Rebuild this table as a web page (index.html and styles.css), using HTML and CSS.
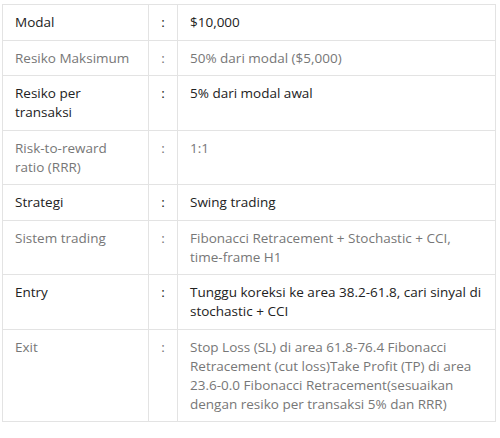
FILE: index.html
```html
<!DOCTYPE html>
<html>
<head>
<meta charset="utf-8">
<link rel="stylesheet" href="styles.css">
</head>
<body>
<div class="wrap">
<table class="info">
  <colgroup><col class="c-label"><col class="c-sep"><col class="c-val"></colgroup>
  <tr class="dark"><td>Modal</td><td class="sep">:</td><td>$10,000</td></tr>
  <tr class="light"><td>Resiko Maksimum</td><td class="sep">:</td><td>50% dari modal ($5,000)</td></tr>
  <tr class="dark"><td>Resiko per transaksi</td><td class="sep">:</td><td>5% dari modal awal</td></tr>
  <tr class="light"><td>Risk-to-reward ratio (RRR)</td><td class="sep">:</td><td>1:1</td></tr>
  <tr class="dark"><td>Strategi</td><td class="sep">:</td><td>Swing trading</td></tr>
  <tr class="light"><td>Sistem trading</td><td class="sep">:</td><td>Fibonacci Retracement + Stochastic + CCI, time-frame H1</td></tr>
  <tr class="dark"><td>Entry</td><td class="sep">:</td><td>Tunggu koreksi ke area 38.2-61.8, cari sinyal di stochastic + CCI</td></tr>
  <tr class="light"><td>Exit</td><td class="sep">:</td><td>Stop Loss (SL) di area 61.8-76.4 Fibonacci Retracement (cut loss)Take Profit (TP) di area 23.6-0.0 Fibonacci Retracement(sesuaikan dengan resiko per transaksi 5% dan RRR)</td></tr>
</table>
</div>
</body>
</html>
```
FILE: styles.css
```css
html, body {
  margin: 0;
  padding: 0;
  background: #fff;
}
.wrap {
  padding: 4px 0 0 2px;
}
.info {
  width: 494px;
  border-collapse: collapse;
  table-layout: fixed;
  font-family: "Open Sans", sans-serif;
  font-size: 13.5px;
  line-height: 19px;
  border: 1px solid #e3e3e3;
}
.c-label { width: 146px; }
.c-sep { width: 29px; }
.info td {
  border: 1px solid #e3e3e3;
  padding: 8px 12px 7.5px 12px;
  vertical-align: top;
  text-align: left;
}
.info td:first-child {
  padding-right: 16px;
}
.info td.sep {
  text-align: center;
  padding-left: 0;
  padding-right: 0;
}
.dark td { color: #222; }
.light td { color: #777; }
```
